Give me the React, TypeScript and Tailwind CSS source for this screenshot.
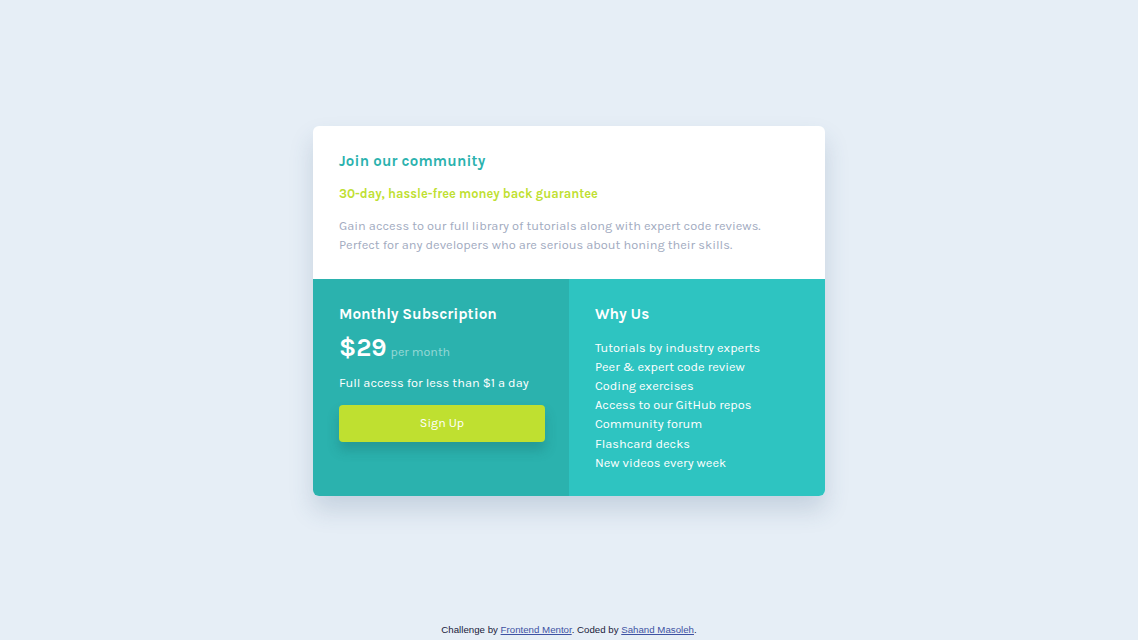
export default function App() {
  const perks = [
    "Tutorials by industry experts",
    "Peer & expert code review",
    "Coding exercises",
    "Access to our GitHub repos",
    "Community forum",
    "Flashcard decks",
    "New videos every week",
  ];

  return (
    <div className="min-h-screen h-[640px] bg-[#e6eef6] flex flex-col items-center font-['Karla','Lato','Noto_Sans',sans-serif]">
      <main className="flex-1 flex items-center justify-center pb-[2px]">
        {/* card */}
        <div className="w-[512px] rounded-[6px] overflow-hidden bg-white shadow-[0_14px_24px_rgba(48,84,120,0.18)]">
          <div className="px-[26px] pt-[23px] pb-[25px]">
            <h1 className="text-[#2bb2ae] text-[15px] font-bold tracking-[0.2px] leading-[24px]">Join our community</h1>
            <p className="mt-[11px] text-[#bfdf32] text-[12.8px] font-bold leading-[20px]">30-day, hassle-free money back guarantee</p>
            <p className="mt-[12px] text-[#a2abbf] text-[12.8px] leading-[19px]">
              Gain access to our full library of tutorials along with expert code reviews.
              <br />
              Perfect for any developers who are serious about honing their skills.
            </p>
          </div>

          <div className="grid grid-cols-2 h-[217px]">
            <div className="bg-[#2bb2ae] px-[26px] pt-[24px] text-white">
              <h2 className="text-[15.3px] font-bold leading-[22px]">Monthly Subscription</h2>
              <div className="mt-[7px] flex items-baseline gap-[4px]">
                <span className="text-[25px] font-bold leading-[32px]">$29</span>
                <span className="text-[12.5px] text-white/50">per month</span>
              </div>
              <p className="mt-[9px] text-[12.8px] leading-[20px]">Full access for less than $1 a day</p>
              <button className="mt-[12px] w-[206px] h-[37px] rounded-[4px] bg-[#bfe030] text-white text-[12.5px] shadow-[0_8px_12px_rgba(20,80,80,0.25)]">
                Sign Up
              </button>
            </div>

            <div className="bg-[#2ec4c1] px-[26px] pt-[24px] text-white">
              <h2 className="text-[15.3px] font-bold leading-[22px]">Why Us</h2>
              <ul className="mt-[13px] text-[12.75px] leading-[19.2px]">
                {perks.map((p) => (
                  <li key={p}>{p}</li>
                ))}
              </ul>
            </div>
          </div>
        </div>
      </main>

      <footer className="pb-[3px] text-[9.7px] text-[#1a1a3a] font-['Liberation_Sans',sans-serif] leading-[14px]">
        Challenge by{" "}
        <a href="#" className="text-[#3e52a3] underline">Frontend Mentor</a>. Coded by{" "}
        <a href="#" className="text-[#3e52a3] underline">Sahand Masoleh</a>.
      </footer>
    </div>
  );
}
